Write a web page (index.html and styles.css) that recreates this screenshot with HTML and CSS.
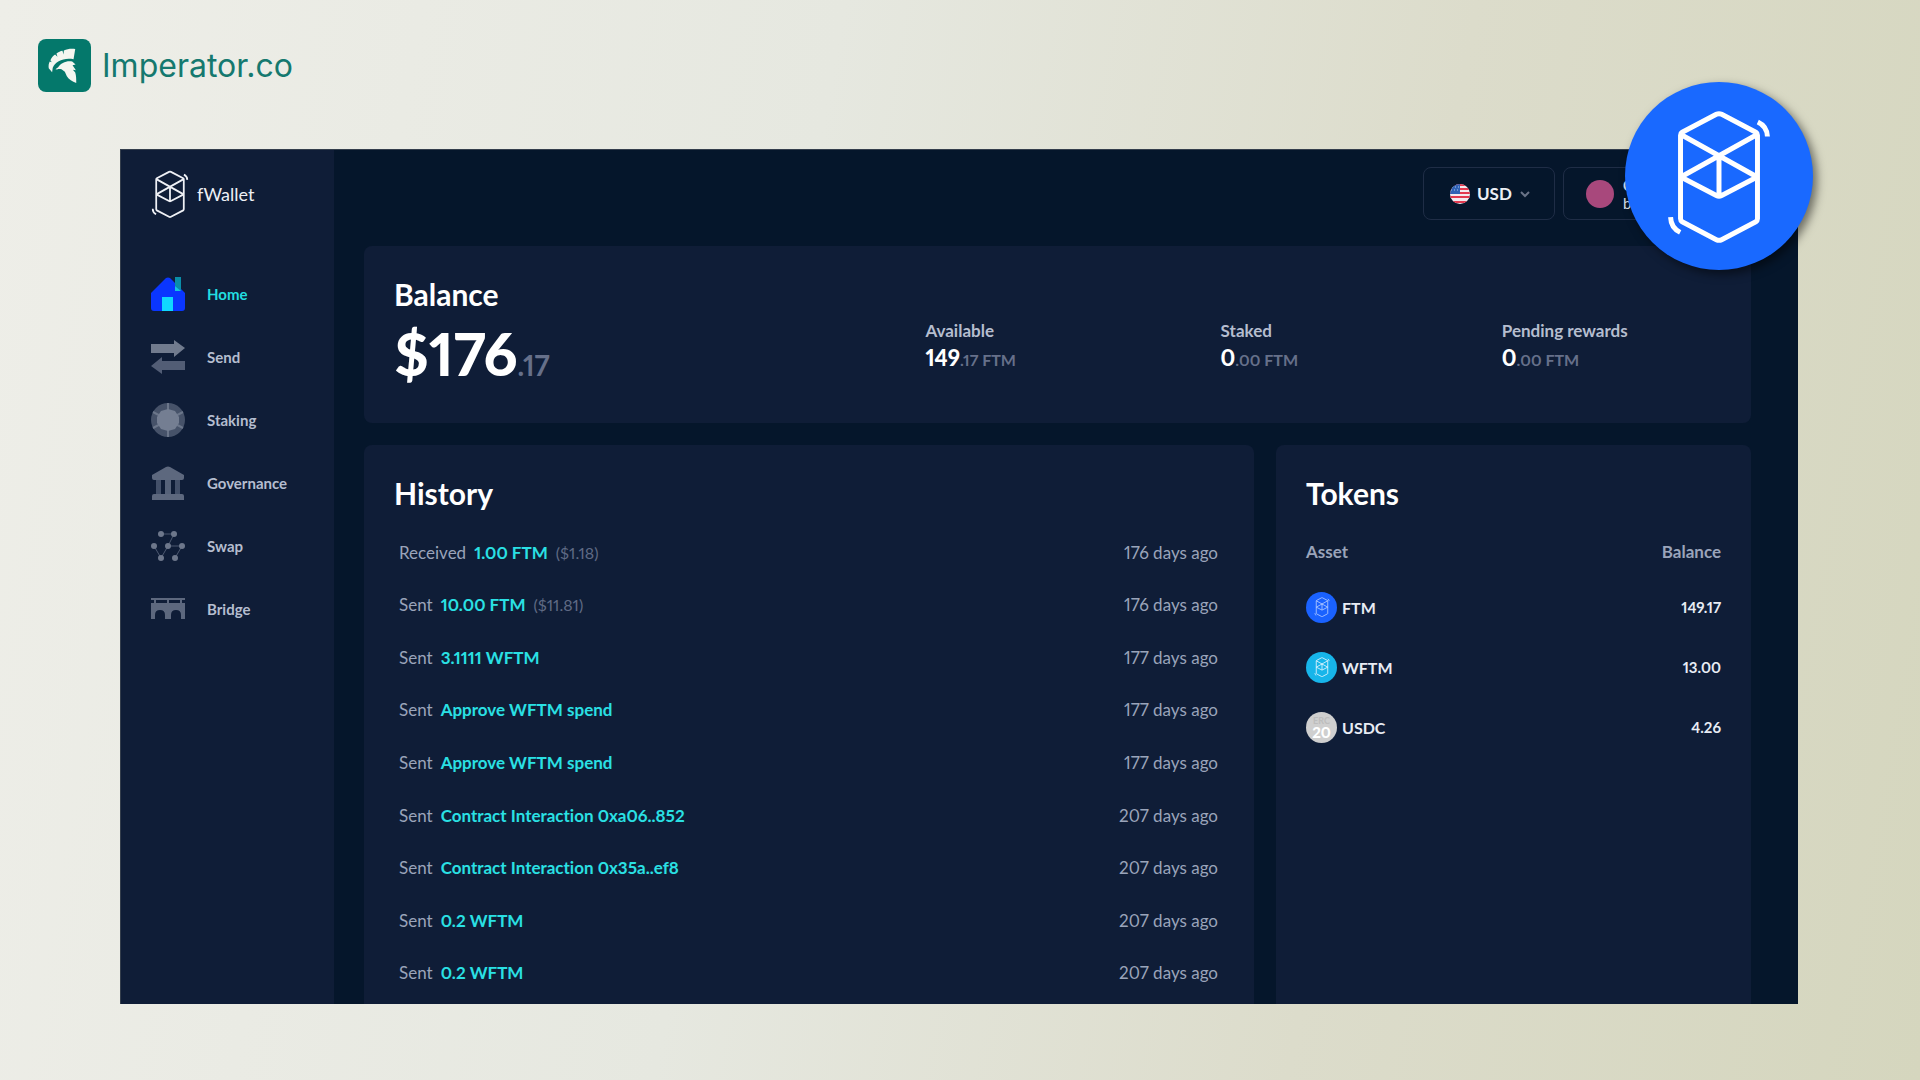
FILE: index.html
```
<!DOCTYPE html>
<html lang="en">
<head>
<meta charset="utf-8">
<title>fWallet</title>
<link rel="stylesheet" href="styles.css">
</head>
<body>
<svg class="sprite" aria-hidden="true">
  <symbol id="fantom" viewBox="0 0 312 404">
    <g fill="none" stroke="currentColor" stroke-width="15" stroke-linejoin="round">
      <path d="M148 16q8-4 16 0l103 54q5 3 5 9v252q0 6-5 9l-103 54q-8 4-16 0L45 340q-5-3-5-9V79q0-6 5-9z"/>
      <path d="M41 77l230 128M271 77L41 205M41 205l107 56q8 4 16 0l107-56M156 140v122"/>
      <path d="M273 39q28 13 29 44M10 326q1 32 29 46"/>
    </g>
  </symbol>
</svg>

<header class="brand">
  <svg class="brand-mark" viewBox="0 0 158 158" aria-hidden="true">
    <rect width="158" height="158" rx="24" fill="#04786b"/>
    <path fill="#f4f6f0" d="M111 30l-5 30c-30-5-54 6-62 26l-2 13-10-12c-1-8 0-14 3-20l6 2-4-6c4-8 8-13 14-17l7 7-3-10c6-4 12-7 18-8l3 11 1-12c10-4 22-6 34-4z"/>
    <path fill="#f4f6f0" d="M60 84c8-12 24-20 42-17l10 9-9 2 10 15-9-1 7 8c3 10 3 20 3 31-12-4-22-10-28-20l-6-13-10-8c-5 0-9-1-13 1l-5-1z"/>
  </svg>
  <span class="brand-name">Imperator.co</span>
</header>

<div class="app">
  <aside class="sidebar">
    <a class="wallet-logo" href="#"><svg viewBox="0 0 312 404" aria-hidden="true"><use href="#fantom"/></svg>fWallet</a>
    <nav class="nav">
      <a class="active" href="#">
        <svg viewBox="0 0 34 34" aria-hidden="true"><path fill="#0a36ff" d="M0 16L15 1q2-1 4 0l15 15v15q0 3-3 3H3q-3 0-3-3z"/><path fill="#0a8ea8" d="M24 0h6v14l-6-5z"/><path fill="#14c8dc" d="M24 9l6 5h-6z"/><path fill="#10d8ff" d="M11 20h11v14H11z"/></svg>
        Home</a>
      <a href="#">
        <svg viewBox="0 0 34 34" aria-hidden="true"><path fill="#717b8e" d="M0 4h23V0l11 8-11 9v-4H0z"/><path fill="#525d75" d="M34 30H11v4L0 26l11-9v4h23z"/></svg>
        Send</a>
      <a href="#">
        <svg viewBox="0 0 34 34" aria-hidden="true"><circle cx="17" cy="17" r="17" fill="#465269"/><path stroke="#6b768a" stroke-width="2" d="M17 0v34M2 9l30 16M2 25L32 9"/><path fill="#747e92" d="M17 6l7 2 4 6v6l-4 6-7 2-7-2-4-6v-6l4-6z"/></svg>
        Staking</a>
      <a href="#">
        <svg viewBox="0 0 34 34" aria-hidden="true"><path fill="#5d687e" d="M1 9L15 1q2-1 4 0l14 8v3q0 2-2 2H3q-2 0-2-2zM3 28h28q2 0 2 2v4H1v-4q0-2 2-2z"/><path fill="#435069" d="M5 14h5v14H5zM24 14h5v14h-5z"/><path fill="#566279" d="M14 14h6v14h-6z"/></svg>
        Governance</a>
      <a href="#">
        <svg viewBox="0 0 34 34" aria-hidden="true"><path fill="none" stroke="#4d5971" d="M10 5h13l-6 12h14l-7 12M3 17l7 12 7-12"/><g fill="#6d778b"><circle cx="10" cy="5" r="3"/><circle cx="23" cy="5" r="3"/><circle cx="3" cy="17" r="3"/><circle cx="17" cy="17" r="3"/><circle cx="31" cy="17" r="3"/><circle cx="10" cy="29" r="3"/><circle cx="24" cy="29" r="3"/></g></svg>
        Swap</a>
      <a href="#">
        <svg viewBox="0 0 34 34" aria-hidden="true"><path fill="#5d687e" d="M0 6h34v2H0zM3 8h2v3H3zM16 8h2v3h-2zM29 8h2v3h-2zM0 11h34v16h-4v-4q0-5-5-5t-5 5v4h-6v-4q0-5-5-5t-5 5v4H0z"/></svg>
        Bridge</a>
    </nav>
  </aside>

  <main class="main">
    <div class="toolbar">
      <label class="currency">
        <svg class="flag" viewBox="0 0 20 20" aria-hidden="true"><clipPath id="disc"><circle cx="10" cy="10" r="10"/></clipPath><g clip-path="url(#disc)"><path fill="#f3e9ee" d="M0 0h20v20H0z"/><path stroke="#e2394f" stroke-width="2" d="M0 1h20M0 5h20M0 9h20M0 13h20M0 18h20"/><path fill="#2f62b5" d="M0 0h10v10H0z"/><path stroke="#a9c4ea" stroke-dasharray="1 2" d="M2 3h8M1 6h9"/></g></svg>
        <select aria-label="Currency"><option>USD</option></select>
        <svg class="chevron" viewBox="0 0 10 8" aria-hidden="true"><path d="M1 2l4 4 4-4" fill="none" stroke="#6a7387" stroke-width="2"/></svg>
      </label>
      <button class="account" type="button">
        <span class="avatar"></span>
        <span class="account-text"><b>C</b><span>b</span></span>
      </button>
    </div>

    <section class="card summary">
      <div>
        <h2>Balance</h2>
        <p class="amount">$176<span>.17</span></p>
      </div>
      <dl class="stat"><dt>Available</dt><dd><b>149</b>.17 FTM</dd></dl>
      <dl class="stat"><dt>Staked</dt><dd><b>0</b>.00 FTM</dd></dl>
      <dl class="stat"><dt>Pending rewards</dt><dd><b>0</b>.00 FTM</dd></dl>
    </section>

    <div class="panels">
      <section class="card history">
        <h2>History</h2>
        <ul>
          <li><span>Received</span><a href="#">1.00 FTM</a><small>($1.18)</small><time>176 days ago</time></li>
          <li><span>Sent</span><a href="#">10.00 FTM</a><small>($11.81)</small><time>176 days ago</time></li>
          <li><span>Sent</span><a href="#">3.1111 WFTM</a><time>177 days ago</time></li>
          <li><span>Sent</span><a href="#">Approve WFTM spend</a><time>177 days ago</time></li>
          <li><span>Sent</span><a href="#">Approve WFTM spend</a><time>177 days ago</time></li>
          <li><span>Sent</span><a href="#">Contract Interaction 0xa06..852</a><time>207 days ago</time></li>
          <li><span>Sent</span><a href="#">Contract Interaction 0x35a..ef8</a><time>207 days ago</time></li>
          <li><span>Sent</span><a href="#">0.2 WFTM</a><time>207 days ago</time></li>
          <li><span>Sent</span><a href="#">0.2 WFTM</a><time>207 days ago</time></li>
        </ul>
      </section>

      <section class="card tokens">
        <h2>Tokens</h2>
        <table>
          <thead><tr><th scope="col">Asset</th><th scope="col">Balance</th></tr></thead>
          <tbody>
            <tr><td><div class="token"><span class="coin ftm"><svg viewBox="0 0 312 404" aria-hidden="true"><use href="#fantom"/></svg></span>FTM</div></td><td>149.17</td></tr>
            <tr><td><div class="token"><span class="coin wftm"><svg viewBox="0 0 312 404" aria-hidden="true"><use href="#fantom"/></svg></span>WFTM</div></td><td>13.00</td></tr>
            <tr><td><div class="token"><span class="coin erc"><i>ERC</i><b>20</b></span>USDC</div></td><td>4.26</td></tr>
          </tbody>
        </table>
      </section>
    </div>
  </main>

  <div class="badge"><svg viewBox="0 0 312 404" role="img" aria-label="Fantom"><use href="#fantom"/></svg></div>
</div>
</body>
</html>
```
FILE: styles.css
```
* { box-sizing: border-box; }

body {
  margin: 0;
  min-height: 100vh;
  display: flex;
  flex-direction: column;
  padding: 0 122px 76px 120px;
  background: linear-gradient(100deg, #eeeee8 0%, #e6e8e0 40%, #dcdccb 70%, #d5d6be 100%);
  color: #fff;
  font-family: Lato, "Liberation Sans", sans-serif;
  font-size: 17px;
  font-variant-ligatures: none;
  font-variant-numeric: proportional-nums;
}

h2, p, ul, dl, dd { margin: 0; padding: 0; }
ul { list-style: none; }
a { text-decoration: none; }
svg { display: block; flex: none; }
.sprite { position: absolute; width: 0; height: 0; }

.brand {
  display: flex;
  align-items: center;
  gap: 11px;
  height: 149px;
  margin-left: -82px;
  padding-bottom: 18px;
  color: #15796f;
}
.brand-mark { width: 53px; height: 53px; }
.brand-name { font-family: Inter, sans-serif; font-size: 32px; }

.app {
  position: relative;
  flex: 1;
  display: flex;
  background: #05162b;
  border-top: 1px solid #343e4c;
  border-left: 1px solid #343e4c;
}

.sidebar {
  width: 213px;
  padding: 20px 0 0 30px;
  background: #0f1d37;
}
.wallet-logo {
  display: flex;
  align-items: center;
  gap: 8px;
  margin-bottom: 44px;
  color: #eef0f5;
  font-size: 18px;
}
.wallet-logo svg { width: 38px; height: 48px; }
.nav { display: flex; flex-direction: column; }
.nav a {
  display: flex;
  align-items: center;
  gap: 22px;
  height: 63px;
  color: #b5bdcf;
  font-size: 15px;
  font-weight: 700;
}
.nav .active { color: #22dde0; }
.nav svg { width: 34px; height: 34px; }

.main {
  flex: 1;
  display: flex;
  flex-direction: column;
  padding: 17px 47px 0 30px;
}

.toolbar {
  display: flex;
  justify-content: flex-end;
  gap: 8px;
  height: 53px;
  margin-bottom: 26px;
}
.currency, .account {
  display: flex;
  align-items: center;
  border: 1px solid #1f2d46;
  border-radius: 8px;
}
.currency { width: 132px; padding-left: 26px; gap: 7px; }
.flag { width: 20px; height: 20px; }
.chevron { width: 10px; height: 8px; }
.currency select {
  appearance: none;
  width: 36px;
  padding: 0;
  border: 0;
  background: none;
  color: #eceff5;
  font: 700 17px Lato, sans-serif;
}
.account {
  width: 188px;
  padding: 0 0 0 22px;
  gap: 9px;
  background: none;
  color: #dfe3ec;
  font: 400 15px/18px Lato, sans-serif;
  text-align: left;
}
.avatar { width: 28px; height: 28px; border-radius: 50%; background: #a8487c; }
.account-text { display: flex; flex-direction: column; }

.card { background: #0f1d37; border-radius: 8px; }
h2 { font-size: 30px; line-height: 40px; }

.summary {
  display: grid;
  grid-template-columns: 531fr 295fr 281fr 218fr;
  align-items: end;
  margin-bottom: 22px;
  padding: 28px 31px 41px 30px;
}
.amount {
  margin-top: 12px;
  font-size: 59px;
  font-weight: 900;
  line-height: 56px;
}
.amount span { color: #66708a; font-size: 28px; font-weight: 700; line-height: 28px; }
.stat { padding-bottom: 8px; }
.stat dt { color: #b5bdcf; font-weight: 700; line-height: 26px; }
.stat dd { color: #66708a; font-size: 16px; font-weight: 700; line-height: 28px; }
.stat b { color: #fff; font-size: 22px; font-weight: 900; }

.panels {
  flex: 1;
  display: grid;
  grid-template-columns: 890fr 475fr;
  gap: 22px;
}
.panels .card { border-radius: 8px 8px 0 0; }

.history {
  display: flex;
  flex-direction: column;
  padding: 28px 36px 5px 30px;
}
.history h2, .tokens h2 { margin-bottom: 13px; }
.history ul {
  flex: 1;
  display: grid;
  grid-auto-rows: 1fr;
  padding-left: 5px;
}
.history li {
  display: flex;
  align-items: center;
  gap: 8px;
  color: #9aa4ba;
}
.history a { color: #2ae0e4; font-weight: 700; }
.history small { color: #5f6a84; font-size: 16px; }
.history time { margin-left: auto; }

.tokens { padding: 28px 30px 0; }
.tokens table { width: 100%; border-collapse: collapse; }
.tokens th, .tokens td { padding: 0; text-align: left; font-weight: 700; }
.tokens th { height: 51px; color: #9aa4ba; font-size: 17px; }
.tokens td { height: 60px; color: #e8ecf4; font-size: 15px; }
.tokens th:last-child, .tokens td:last-child { text-align: right; }
.token { display: flex; align-items: center; gap: 5px; font-size: 16px; }
.coin {
  display: flex;
  flex-direction: column;
  align-items: center;
  justify-content: center;
  width: 31px;
  height: 31px;
  border-radius: 50%;
}
.coin svg { width: 16px; height: 20px; }
.ftm { background: #1a62ff; color: #c6d7ff; }
.wftm { background: #17b5ea; color: #fff; }
.erc { background: #cfcfcf; color: #fff; }
.erc i { color: #bdbdbd; font: 700 9px/9px Lato, sans-serif; }
.erc b { font-size: 15px; line-height: 14px; }

.badge {
  position: absolute;
  top: -68px;
  right: -15px;
  display: flex;
  align-items: center;
  justify-content: center;
  width: 188px;
  height: 188px;
  border-radius: 50%;
  background: #1969ff;
  color: #fff;
  box-shadow: 4px 4px 10px rgba(0, 0, 0, 0.5);
}
.badge svg { width: 104px; height: 134px; }
```
